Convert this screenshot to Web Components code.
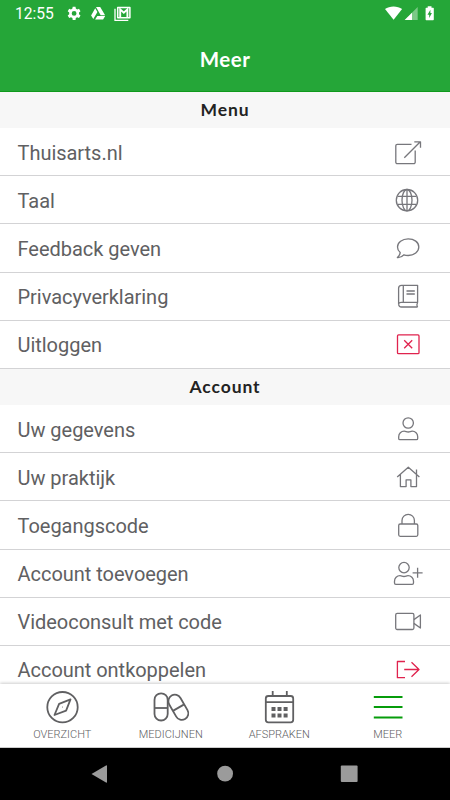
<!DOCTYPE html>
<html lang="nl">
<head>
<meta charset="utf-8">
<title>Meer</title>
<style>
    body {
        margin: 0;
        background: #fff;
        font-family: Roboto, sans-serif;
    }
</style>
</head>
<body>
<more-page></more-page>

<script>
const icons = {
    external: `<path d="M23.5 12.3H9.3a1.500 1.500 0 0 0-1.500 1.500v16.400a1.500 1.500 0 0 0 1.500 1.500h16.400a1.500 1.500 0 0 0 1.500-1.500V18.500M16.300 25.700 32.300 9.800M26.300 9.800h6.200v6"/>`,
    globe: `<circle cx="19" cy="20.2" r="10.7"/><ellipse cx="19" cy="20.2" rx="5" ry="10.7"/><path d="M19 9.5v21.4M9.6 16.3h18.8M9.6 24.3h18.8"/>`,
    comment: `<path d="M20.2 10.8c-6 0-10.7 3.6-10.7 8.2 0 2.2 1 4.1 2.7 5.6-.2 1.9-1.3 3.6-2.8 4.9 2.4.2 4.8-.8 6.5-2.7 1.3.5 2.8.7 4.3.7 6 0 10.6-3.8 10.6-8.5s-4.600-8.200-10.600-8.200z"/>`,
    book: `<path d="M29.600 26.300V9.300H13.600a3 3 0 0 0-3 3v15.900a2.800 2.800 0 0 0 2.800 2.800h16.200M10.600 28.600a2.500 2.500 0 0 1 2.800-2.300h16.200c-.8 1.500-.8 3.200 0 4.700M15.300 9.300v17M18.500 15h8.300M18.500 18h8.300"/>`,
    logout: `<rect x="9.500" y="10.900" width="21.500" height="18.800" rx="1"/><path d="m16.200 16.200 8 8M24.200 16.200l-8 8"/>`,
    user: `<circle cx="20.200" cy="14" r="5.200"/><path d="M10.700 29.400v-1.700a5.500 5.500 0 0 1 5.500-5.500c1.700 0 2.200.8 4 .8s2.300-.8 4-.8a5.500 5.500 0 0 1 5.500 5.500v1.700a1.300 1.300 0 0 1-1.300 1.300H12a1.300 1.300 0 0 1-1.300-1.300"/>`,
    house: `<path d="m9.200 19.900 11.100-9.700 11.100 9.700M12.400 17.400v12.200h5.700v-6.800h4.800v6.800h5.600V17.400M28.500 17V12.400"/>`,
    lock: `<rect x="10.700" y="19" width="19.100" height="12.300" rx="1.500"/><path d="M14 19v-3.500a6.200 6.200 0 0 1 12.400 0V19"/>`,
    userAdd: `<circle cx="16" cy="14.600" r="5.200"/><path d="M6.500 30v-1.800a5.500 5.500 0 0 1 5.500-5.500c1.700 0 2.200.8 4 .8s2.300-.8 4-.8a5.500 5.500 0 0 1 5.500 5.500V30a1.300 1.300 0 0 1-1.300 1.300H7.800A1.300 1.300 0 0 1 6.500 30M29.600 14.800v10M24.600 19.800h10"/>`,
    video: `<rect x="7.700" y="12.400" width="18.200" height="16.100" rx="1.500"/><path d="m25.900 18.600 6.500-4.600v13l-6.500-4.600"/>`,
    unlink: `<path d="M17 12.500H9.400v16.200H17M16.200 20.500h15M23.500 13.200l7.500 7.300-7.500 7.300"/>`,
    compass: `<circle cx="20.500" cy="20.200" r="15.200"/><path d="m28.500 12.400-11.400 4.400-4.600 11.200 11.600-4.300zM20.300 20.200h.4"/>`,
    pills: `<rect x="3.500" y="6.300" width="13.200" height="27.200" rx="6.600"/><path d="M3.500 21h13.200"/><g transform="rotate(-30 27.300 20.200)"><rect x="20.800" y="6.800" width="13" height="27" rx="6.500"/><path d="M20.800 20.700h13"/></g>`,
    calendar: `<rect x="6.800" y="9" width="27.400" height="26.300" rx="2.500"/><path d="M6.800 15.200h27.400M13.700 4v5M27.800 4v5"/><path d="M14.500 20v4M20.500 20v4M26.600 20v4M14.500 26.400v4M20.500 26.400v4M26.600 26.400v4" stroke-width="4"/>`,
    menu: `<path d="M5.800 10h28.700M5.800 20h28.700M5.800 30.500h28.700" stroke-width="2"/>`
};

class LineIcon extends HTMLElement {
    constructor() {
        super();
        this.shadowDOM = this.attachShadow({mode: "open"});
    }

    connectedCallback() {
        this.shadowDOM.innerHTML = `
        <style>
        :host {
            display: block;
            width: 40px;
            height: 40px;
        }

        svg {
            display: block;
            fill: none;
            stroke: currentColor;
            stroke-width: var(--line, 1.3);
            stroke-linejoin: round;
        }
        </style>
        <svg width="40" height="40" viewBox="0 0 40 40">${icons[this.getAttribute("name")]}</svg>
        `;
    }
}

class StatusBar extends HTMLElement {
    constructor() {
        super();
        this.shadowDOM = this.attachShadow({mode: "open"});
    }

    connectedCallback() {
        this.shadowDOM.innerHTML = `
        <style>
        :host {
            display: flex;
            justify-content: space-between;
            align-items: center;
            height: 27px;
            padding: 0 14px 0 15px;
            color: #fff;
            font-size: 15.6px;
            font-weight: 400;
        }

        .left, .right {
            display: flex;
            align-items: center;
        }

        .time {
            width: 51px;
            padding-top: 1px;
        }

        svg {
            display: block;
            fill: #fff;
        }
        </style>
        <div class="left">
            <span class="time">12:55</span>
            <svg width="66" height="20" viewBox="66 3.500 66 20">
                <path fill-rule="evenodd" d="m72.700 6.200-.3 1.900-1.400.8-1.800-.7-1.500 2.500 1.500 1.200v1.800l-1.500 1.200 1.500 2.500 1.800-.7 1.400.8.3 1.900h2.800l.3-1.900 1.400-.8 1.800.7 1.500-2.500-1.500-1.200v-1.800l1.500-1.200-1.500-2.500-1.800.7-1.400-.8-.3-1.900zM74.100 10.500a2.400 2.400 0 1 1 0 4.800 2.400 2.400 0 0 1 0-4.800z"/>
                <path d="M96 6.500h4.200l4.900 8.200h-4.400zM95.200 7.800l2.200 3.700-4.100 7.100-2.200-3.700zM97.300 15.500h7.900l-2.100 3.400h-8z"/>
                <path fill="none" stroke="#fff" stroke-width="1.300" d="M115 8.300v11.500h13.300"/>
                <path fill="none" stroke="#fff" stroke-width="1.500" stroke-linejoin="round" d="M117.700 7h12.200v10.300h-12.200z"/>
                <path fill="none" stroke="#fff" stroke-width="1.900" d="M120.200 17.200V8.800l3.600 3.300 3.600-3.300v8.400"/>
            </svg>
        </div>
        <div class="right">
            <svg width="52" height="20" viewBox="384 3.500 52 20">
                <path d="M385 8.500c4.500-3.500 12.600-3.500 17.100 0l-8.500 10.700z"/>
                <path opacity=".4" d="M417.700 6.500v13h-13z"/>
                <path d="M412 12.200v7.300h-7.300z"/>
                <path fill-rule="evenodd" d="M427.700 5.800h3.800v1.400h1.700q.6 0 .6.600v11.300q0 .7-.7.700h-6.800q-.7 0-.7-.7V7.800q0-.6.600-.6h1.500zm2.700 3.400-2.900 5h1.700v3.400l2.700-5h-1.500z"/>
            </svg>
        </div>
        `;
    }
}

class PageHeader extends HTMLElement {
    constructor() {
        super();
        this.shadowDOM = this.attachShadow({mode: "open"});
    }

    connectedCallback() {
        this.shadowDOM.innerHTML = `
        <style>
        :host {
            display: block;
            box-sizing: border-box;
            height: 92px;
            background: #25a638;
            border-bottom: 1px solid #0f9a1c;
        }

        h1 {
            margin: 0;
            color: #fff;
            font: 700 20.500px/64px Lato, sans-serif;
            letter-spacing: .5px;
            text-align: center;
        }
        </style>
        <status-bar></status-bar>
        <h1><slot></slot></h1>
        `;
    }
}

class MenuSection extends HTMLElement {
    constructor() {
        super();
        this.shadowDOM = this.attachShadow({mode: "open"});
    }

    connectedCallback() {
        this.shadowDOM.innerHTML = `
        <style>
        :host {
            display: block;
        }

        h2 {
            margin: 0;
            height: 36.200px;
            background: #f7f7f7;
            color: #222;
            font: 700 17.500px/36px Lato, sans-serif;
            letter-spacing: .9px;
            text-align: center;
        }
        </style>
        <h2>${this.getAttribute("heading")}</h2>
        <slot></slot>
        `;
    }
}

class MenuRow extends HTMLElement {
    constructor() {
        super();
        this.shadowDOM = this.attachShadow({mode: "open"});
    }

    connectedCallback() {
        this.shadowDOM.innerHTML = `
        <style>
        :host {
            display: flex;
            align-items: center;
            justify-content: space-between;
            box-sizing: border-box;
            height: 48.150px;
            padding: 2px 22px 0 17.500px;
            border-bottom: 1px solid #d3d3d5;
            color: #606062;
            font-size: 20px;
            letter-spacing: -.03px;
        }

        line-icon {
            color: #77777c;
            margin-top: -2px;
        }

        :host([danger]) line-icon {
            color: #e0234e;
        }
        </style>
        <span><slot></slot></span>
        <line-icon name="${this.getAttribute("icon")}"></line-icon>
        `;
    }
}

class TabItem extends HTMLElement {
    constructor() {
        super();
        this.shadowDOM = this.attachShadow({mode: "open"});
    }

    connectedCallback() {
        this.shadowDOM.innerHTML = `
        <style>
        :host {
            display: flex;
            flex: 1;
            flex-direction: column;
            align-items: center;
            padding-top: 3px;
            color: #606062;
            font-size: 11px;
            font-weight: 300;
            line-height: 16px;
        }

        line-icon {
            --line: 1.800;
        }

        :host([active]) line-icon {
            color: #069c0b;
        }
        </style>
        <line-icon name="${this.getAttribute("icon")}"></line-icon>
        <span><slot></slot></span>
        `;
    }
}

class TabBar extends HTMLElement {
    constructor() {
        super();
        this.shadowDOM = this.attachShadow({mode: "open"});
    }

    connectedCallback() {
        this.shadowDOM.innerHTML = `
        <style>
        :host {
            display: flex;
            box-sizing: border-box;
            height: 64px;
            padding: 0 8px;
            background: #fff;
            border-bottom: 1px solid #ccc;
            box-shadow: 0 -1px 3px rgba(0, 0, 0, 0.2);
            z-index: 1;
        }
        </style>
        <slot></slot>
        `;
    }
}

class SystemNav extends HTMLElement {
    constructor() {
        super();
        this.shadowDOM = this.attachShadow({mode: "open"});
    }

    connectedCallback() {
        this.shadowDOM.innerHTML = `
        <style>
        :host {
            display: flex;
            justify-content: space-between;
            align-items: center;
            box-sizing: border-box;
            height: 52px;
            padding: 0 92px 0 91px;
            background: #000;
        }

        svg {
            display: block;
            fill: #9b9b9b;
        }
        </style>
        <svg width="18" height="20"><path d="M.5 10 15 1.400q1-.5 1 .6v16q0 1-1 .6z"/></svg>
        <svg width="18" height="20"><circle cx="9.100" cy="9.700" r="7.900"/></svg>
        <svg width="18" height="20"><rect x=".8" y="1.400" width="16.800" height="16.600" rx="1"/></svg>
        `;
    }
}

class MorePage extends HTMLElement {
    constructor() {
        super();
        this.shadowDOM = this.attachShadow({mode: "open"});
    }

    connectedCallback() {
        this.shadowDOM.innerHTML = `
        <style>
        :host {
            display: flex;
            flex-direction: column;
            height: 100vh;
            overflow: hidden;
        }

        main {
            flex: 1;
            min-height: 0;
            overflow: hidden;
        }
        </style>
        <page-header>Meer</page-header>
        <main>
            <menu-section heading="Menu">
                <menu-row icon="external">Thuisarts.nl</menu-row>
                <menu-row icon="globe">Taal</menu-row>
                <menu-row icon="comment">Feedback geven</menu-row>
                <menu-row icon="book">Privacyverklaring</menu-row>
                <menu-row icon="logout" danger>Uitloggen</menu-row>
            </menu-section>
            <menu-section heading="Account">
                <menu-row icon="user">Uw gegevens</menu-row>
                <menu-row icon="house">Uw praktijk</menu-row>
                <menu-row icon="lock">Toegangscode</menu-row>
                <menu-row icon="userAdd">Account toevoegen</menu-row>
                <menu-row icon="video">Videoconsult met code</menu-row>
                <menu-row icon="unlink" danger>Account ontkoppelen</menu-row>
            </menu-section>
        </main>
        <tab-bar>
            <tab-item icon="compass">OVERZICHT</tab-item>
            <tab-item icon="pills">MEDICIJNEN</tab-item>
            <tab-item icon="calendar">AFSPRAKEN</tab-item>
            <tab-item icon="menu" active>MEER</tab-item>
        </tab-bar>
        <system-nav></system-nav>
        `;
    }
}

customElements.define('line-icon', LineIcon);
customElements.define('status-bar', StatusBar);
customElements.define('page-header', PageHeader);
customElements.define('menu-section', MenuSection);
customElements.define('menu-row', MenuRow);
customElements.define('tab-item', TabItem);
customElements.define('tab-bar', TabBar);
customElements.define('system-nav', SystemNav);
customElements.define('more-page', MorePage);
</script>
</body>
</html>
